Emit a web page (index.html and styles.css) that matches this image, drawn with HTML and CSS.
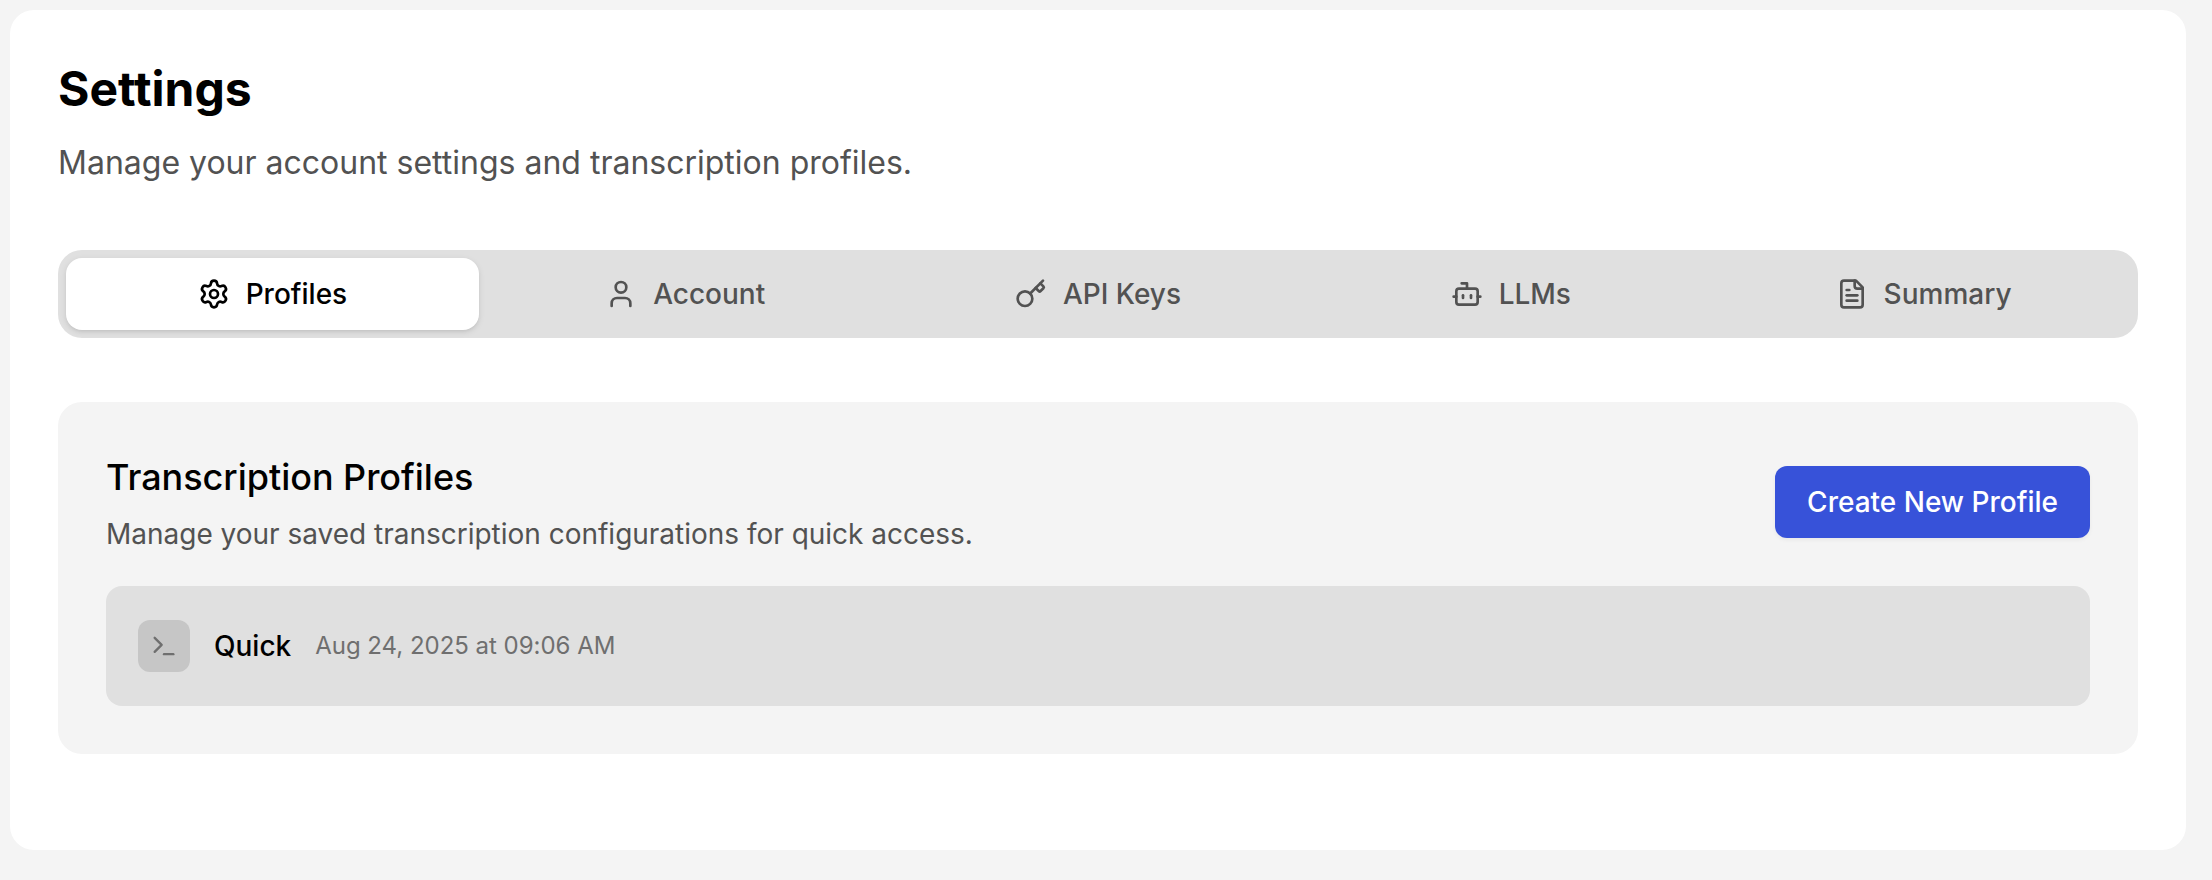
FILE: index.html
```html
<!DOCTYPE html>
<html lang="en">
<head>
<meta charset="utf-8">
<title>Settings</title>
<link rel="stylesheet" href="styles.css">
</head>
<body>
<main class="panel">
  <header class="page-header">
    <h1 class="page-title">Settings</h1>
    <p class="page-subtitle">Manage your account settings and transcription profiles.</p>
  </header>
  <nav class="tabs">
    <button class="tab tab-active">
      <svg class="icon" viewBox="0 0 24 24"><path d="M9.671 4.136a2.34 2.34 0 0 1 4.659 0 2.34 2.34 0 0 0 3.319 1.915 2.34 2.34 0 0 1 2.33 4.033 2.34 2.34 0 0 0 0 3.831 2.34 2.34 0 0 1-2.33 4.033 2.34 2.34 0 0 0-3.319 1.915 2.34 2.34 0 0 1-4.659 0 2.34 2.34 0 0 0-3.32-1.915 2.34 2.34 0 0 1-2.33-4.033 2.34 2.34 0 0 0 0-3.831A2.34 2.34 0 0 1 6.35 6.051a2.34 2.34 0 0 0 3.319-1.915"/><circle cx="12" cy="12" r="3"/></svg>
      <span>Profiles</span>
    </button>
    <button class="tab">
      <svg class="icon" viewBox="0 0 24 24"><path d="M19 21v-2a4 4 0 0 0-4-4H9a4 4 0 0 0-4 4v2"/><circle cx="12" cy="7" r="4"/></svg>
      <span>Account</span>
    </button>
    <button class="tab">
      <svg class="icon" viewBox="0 0 24 24"><path d="m15.5 7.5 2.3 2.3a1 1 0 0 0 1.4 0l2.1-2.1a1 1 0 0 0 0-1.4L19 4"/><path d="m21 2-9.6 9.6"/><circle cx="7.5" cy="15.5" r="5.5"/></svg>
      <span>API Keys</span>
    </button>
    <button class="tab">
      <svg class="icon" viewBox="0 0 24 24"><path d="M12 8V4H8"/><rect width="16" height="12" x="4" y="8" rx="2"/><path d="M2 14h2"/><path d="M20 14h2"/><path d="M15 13v2"/><path d="M9 13v2"/></svg>
      <span>LLMs</span>
    </button>
    <button class="tab">
      <svg class="icon" viewBox="0 0 24 24"><path d="M15 2H6a2 2 0 0 0-2 2v16a2 2 0 0 0 2 2h12a2 2 0 0 0 2-2V7Z"/><path d="M14 2v4a2 2 0 0 0 2 2h4"/><path d="M10 9H8"/><path d="M16 13H8"/><path d="M16 17H8"/></svg>
      <span>Summary</span>
    </button>
  </nav>
  <section class="card">
    <div class="card-header">
      <div>
        <h2 class="card-title">Transcription Profiles</h2>
        <p class="card-desc">Manage your saved transcription configurations for quick access.</p>
      </div>
      <button class="primary">Create New Profile</button>
    </div>
    <div class="profile">
      <div class="profile-icon">
        <svg class="icon icon-small" viewBox="0 0 24 24"><path d="m4 17 6-6-6-6"/><path d="M12 19h8"/></svg>
      </div>
      <span class="profile-name">Quick</span>
      <span class="profile-date">Aug 24, 2025 at 09:06 AM</span>
    </div>
  </section>
</main>
</body>
</html>
```
FILE: styles.css
```css
* { box-sizing: border-box; margin: 0; }
body {
  min-height: 880px;
  padding: 10px 26px 30px 10px;
  background: #f4f4f4;
  color: #000;
  font-family: Inter, "Liberation Sans", sans-serif;
}
button { border: 0; font: inherit; color: inherit; }
.panel {
  height: 840px;
  padding: 48px;
  border-radius: 24px;
  background: #fff;
}
.page-header { margin-bottom: 63px; }
.page-title {
  margin-bottom: 19px;
  font-size: 48px;
  line-height: 62px;
  font-weight: 700;
}
.page-subtitle { font-size: 32px; line-height: 48px; color: #525252; }
.tabs {
  display: grid;
  grid-template-columns: repeat(5, 1fr);
  height: 88px;
  padding: 8px;
  border-radius: 24px;
  background: #e0e0e0;
}
.tab {
  display: flex;
  align-items: center;
  justify-content: center;
  gap: 16px;
  padding: 0;
  border-radius: 16px;
  background: transparent;
  color: #525252;
  font-size: 28px;
  line-height: 40px;
  font-weight: 500;
}
.tab-active {
  background: #fff;
  color: #000;
  box-shadow: 0 2px 6px rgba(0, 0, 0, 0.1), 0 2px 4px -2px rgba(0, 0, 0, 0.1);
}
.icon {
  width: 32px;
  height: 32px;
  fill: none;
  stroke: currentColor;
  stroke-width: 2;
  stroke-linecap: round;
  stroke-linejoin: round;
}
.card {
  margin-top: 64px;
  padding: 48px;
  border-radius: 24px;
  background: #f4f4f4;
}
.card-header {
  display: flex;
  align-items: center;
  justify-content: space-between;
  margin-bottom: 32px;
}
.card-title {
  margin-bottom: 10px;
  font-size: 36px;
  line-height: 54px;
  font-weight: 500;
  letter-spacing: -0.03px;
}
.card-desc {
  font-size: 28px;
  line-height: 40px;
  letter-spacing: -0.01px;
  color: #525252;
}
.primary {
  height: 72px;
  padding: 0 32px;
  border-radius: 12px;
  background: #3752d9;
  color: #fff;
  font-size: 28px;
  font-weight: 500;
  box-shadow: 0 2px 4px rgba(0, 0, 0, 0.05);
}
.profile {
  display: flex;
  align-items: center;
  height: 120px;
  padding: 0 32px;
  border-radius: 16px;
  background: #e0e0e0;
}
.profile-icon {
  display: flex;
  align-items: center;
  justify-content: center;
  width: 52px;
  height: 52px;
  margin-right: 24px;
  border-radius: 12px;
  background: #c6c6c6;
  color: #6f6f6f;
}
.icon-small { width: 28px; height: 28px; }
.profile-name { margin-right: 24px; font-size: 28px; font-weight: 500; }
.profile-date {
  padding-bottom: 2px;
  font-size: 24px;
  letter-spacing: -0.02px;
  color: #6f6f6f;
}
```
